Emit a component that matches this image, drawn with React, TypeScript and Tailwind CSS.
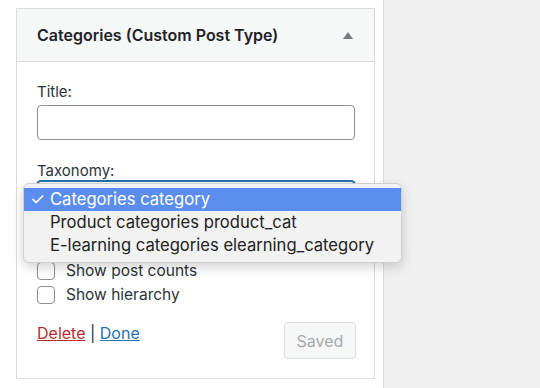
import React from "react";

export default function App() {
  const font = { fontFamily: "Inter, 'Noto Sans', sans-serif" };
  return (
    <div className="flex w-[540px] h-[388px] bg-[#f0f0f0] overflow-hidden" style={font}>
      <div className="w-[384px] h-full bg-white border-r border-[#dcdcde] pt-2 pl-4 shrink-0">
        <div className="w-[359px] h-[371px] border border-[#dcdcde] bg-white flex flex-col">
          <div className="h-[53px] shrink-0 bg-[#f6f7f7] border-b border-[#dcdcde] flex items-center justify-between pl-5 pr-[21px]">
            <span className="text-[16px] font-semibold text-[#1d2327]">Categories (Custom Post Type)</span>
            <svg width="10" height="7" viewBox="0 0 10 7">
              <path d="M5 0 L10 7 L0 7 Z" fill="#787c82" />
            </svg>
          </div>
          <div className="pl-5 pr-[18px] pt-[20px] flex flex-col">
            <label className="text-[15px] text-[#2c3338] leading-[20px]">Title:</label>
            <div className="mt-[3px] h-[35px] w-[318px] border border-[#8c8f94] rounded-[4px] bg-white shrink-0" />
            <label className="mt-[21px] text-[15px] text-[#2c3338] leading-[20px]">Taxonomy:</label>
            <div className="relative mt-0 h-[35px] w-[318px] shrink-0">
              <div className="h-full w-full border border-[#2271b1] rounded-[4px] bg-white shadow-[0_0_0_1px_#2271b1]" />
              <div className="absolute left-[-14px] top-[2px] w-[379px] h-[80px] bg-[#f2f2f2] rounded-[6px] border border-[#d0d0d0] shadow-[0_4px_12px_rgba(0,0,0,0.18)] pt-[4px] text-[16.6px] text-[#222] z-10">
                <div className="h-[23px] bg-[#5a8ded] text-white flex items-center pl-[6px]">
                  <span className="w-[20px] text-[17px]">✓</span>
                  <span>Categories category</span>
                </div>
                <div className="h-[23px] flex items-center pl-[26px]">Product categories product_cat</div>
                <div className="h-[23px] flex items-center pl-[26px]">E-learning categories elearning_category</div>
              </div>
            </div>
            <div className="flex flex-col gap-[6px] mt-[46px]">
              <label className="flex items-center gap-[11px] h-[18px] text-[15.5px] text-[#2c3338]">
                <span className="w-[18px] h-[18px] border border-[#8c8f94] rounded-[4px] bg-white shrink-0" />
                Show post counts
              </label>
              <label className="flex items-center gap-[11px] h-[18px] text-[15.5px] text-[#2c3338]">
                <span className="w-[18px] h-[18px] border border-[#8c8f94] rounded-[4px] bg-white shrink-0" />
                Show hierarchy
              </label>
            </div>
            <div className="flex items-start justify-between mt-[18px]">
              <div className="text-[16px] leading-[20px] text-[#2c3338] mt-[1px]">
                <a className="text-[#b32d2e] underline">Delete</a> | <a className="text-[#2271b1] underline">Done</a>
              </div>
              <button className="w-[72px] h-[37px] border border-[#dcdcde] rounded-[4px] bg-[#f6f7f7] text-[16px] text-[#a7aaad]">Saved</button>
            </div>
          </div>
        </div>
      </div>
    </div>
  );
}
